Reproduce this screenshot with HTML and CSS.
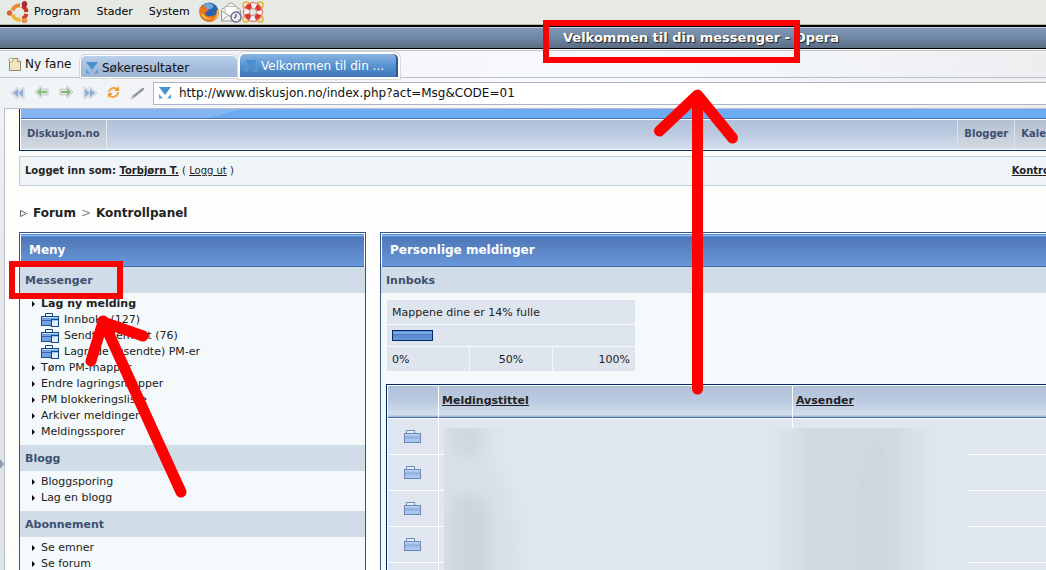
FILE: index.html
```html
<!DOCTYPE html>
<html lang="no">
<head>
  <meta charset="UTF-8" />
  <meta name="viewport" content="width=device-width, initial-scale=1.0" />
  <title>Velkommen til din messenger - Opera</title>
  <link rel="stylesheet" href="styles.css">
</head>
<body>
  <!-- shared icons -->
  <svg class="symbols" aria-hidden="true">
    <symbol id="favicon" viewBox="0 0 14 14">
      <path d="M1 1h12L7 9z" fill="#4692d0" />
      <path d="M1 8l4 4.500H1zM13 8l-4 4.500h4z" fill="#5a9fd6" />
    </symbol>
    <symbol id="pm-folder" viewBox="0 0 18 14">
      <path d="M4.500 3V.5h7V3" fill="#eef5fc" stroke="#1a4a8a" />
      <rect x=".5" y="3.500" width="17" height="9" fill="#6fa3e2" stroke="#1a4a8a" />
      <path d="M1 4.500h16" stroke="#b4d6f8" />
      <path d="M1 7.500h9" stroke="#2f66ad" />
      <rect x="10.500" y="6.500" width="7" height="7" fill="#e4eefa" stroke="#1a4a8a" />
      <path d="M11 7.500h6" stroke="#9cc4ee" />
    </symbol>
    <symbol id="folder" viewBox="0 0 18 14">
      <path d="M2.500 3V.5h8V3" fill="#e9f1fa" stroke="#7289b4" />
      <rect x=".5" y="3.500" width="16" height="9" fill="#a8c6ee" stroke="#6c86b6" />
      <path d="M1 4.500h15" stroke="#b8d7f6" />
      <path d="M1 7.500h15" stroke="#96b6e0" stroke-width="3" />
    </symbol>
  </svg>

  <header class="panel">
    <svg class="panel-logo" viewBox="0 0 22 22" aria-hidden="true">
      <g fill="none" stroke-width="4">
        <path d="M5.500 9.500A7 7 0 0 1 13 4.500" stroke="#f0862b" />
        <path d="M15 5a7 7 0 0 1 4.500 6" stroke="#c8301f" />
        <path d="M19.500 13a7 7 0 0 1-4 4.500" stroke="#d8402a" />
        <path d="M13.500 18.500A7 7 0 0 1 5.500 13.500" stroke="#f4b13b" />
      </g>
      <circle cx="2.500" cy="12" r="2.200" fill="#e5662b" stroke="#c9512a" />
      <circle cx="17.500" cy="3" r="2.400" fill="#b52a3a" stroke="#9b2736" />
      <circle cx="17.500" cy="19.500" r="2.200" fill="#f4a13c" stroke="#d9772a" />
    </svg>
    <nav class="panel-menu">
      <button type="button">Program</button>
      <button type="button">Stader</button>
      <button type="button">System</button>
    </nav>
    <div class="launchers">
      <button type="button" aria-label="Firefox">
        <svg viewBox="0 0 22 22">
          <circle cx="11" cy="11" r="9.500" fill="#2d62ac" />
          <path d="M5 4c4-3 9-2 11 1l-3 3-5 0z" fill="#6fa9de" />
          <path d="M2 5c-2 7 0 15 9 16 8 0 11-7 9.500-13-1 4-3 7-7 7-4 1-7-1-6-4l4-2-4-2 0-3C5 4 4 6 3 7z" fill="#e8741c" />
          <path d="M3 12c1 6 8 8 13 5-4 1-8 0-10-3z" fill="#f9bd3e" />
          <path d="M20.500 8c1 6-2 10-6 12 3-3 5-6 4-10z" fill="#f8c83c" />
        </svg>
      </button>
      <button type="button" aria-label="E-post">
        <svg viewBox="0 0 22 22">
          <path d="M1.500 9L10 2h2l8.500 7v11h-19z" fill="#f3f3f0" stroke="#9a9b97" />
          <path d="M5 5.500h12V12l-6 4-6-4z" fill="#fff" stroke="#bbb" />
          <path d="M1.500 10L11 16l9-6M1.500 20l7-6" fill="none" stroke="#aaa" />
          <circle cx="16" cy="16" r="5" fill="#eeeaf5" stroke="#7d6a9e" stroke-width="1.500" />
          <path d="M16 13v3l-2 1" fill="none" stroke="#333" />
        </svg>
      </button>
      <button type="button" aria-label="Hjelp">
        <svg viewBox="0 0 22 22">
          <g fill="#f7efcf" stroke="#e3b234" stroke-width="1.500">
            <circle cx="4" cy="4" r="3" /><circle cx="18" cy="4" r="3" />
            <circle cx="4" cy="18" r="3" /><circle cx="18" cy="18" r="3" />
          </g>
          <circle cx="11" cy="11" r="6.500" fill="none" stroke="#f5f3ef" stroke-width="6" />
          <circle cx="11" cy="11" r="6.500" fill="none" stroke="#e0362f" stroke-width="5" stroke-dasharray="5.200 5.010" stroke-dashoffset="-2.500" />
          <circle cx="11" cy="11" r="9.500" fill="none" stroke="#d0695c" />
          <circle cx="11" cy="11" r="3.500" fill="#e7e9e5" stroke="#c98a80" />
        </svg>
      </button>
    </div>
  </header>

  <div class="titlebar">
    <h1>Velkommen til din messenger - Opera</h1>
  </div>

  <div class="browser">
    <div class="tabs">
      <button type="button" class="new-tab">
        <svg viewBox="0 0 14 14" aria-hidden="true">
          <path d="M3.500 1.500h6l3 3v9h-11v-9z" fill="#f3e5bd" stroke="#90886f" />
          <path d="M9.500 1.500v3h3" fill="#fff" stroke="#90886f" />
          <circle cx="3" cy="3" r="2" fill="#fffbe8" stroke="#b0a67c" />
        </svg>
        Ny fane
      </button>
      <button type="button" class="tab">
        <svg aria-hidden="true"><use href="#favicon" /></svg>
        Søkeresultater
      </button>
      <button type="button" class="tab tab-active">
        <svg aria-hidden="true"><use href="#favicon" /></svg>
        Velkommen til din ...
      </button>
    </div>

    <div class="toolbar">
      <div class="tools">
        <button type="button" aria-label="Spol tilbake">
          <svg viewBox="0 0 16 16"><path d="M8 2v4l6-4v12l-6-4v4L1 8z" fill="#e2e7ee" stroke="#ccd3dd" /><path d="M8 4v8L3 8zM13 4v8L8 8z" fill="#8fabd4" /></svg>
        </button>
        <button type="button" aria-label="Tilbake">
          <svg viewBox="0 0 16 16"><path d="M1 7l6-6v3h7v6H7v3z" fill="#dde3e1" stroke="#c7cfd0" /><path d="M3 7l4-4v3h6v2H7v3z" fill="#86bd76" /></svg>
        </button>
        <button type="button" aria-label="Fram">
          <svg viewBox="0 0 16 16"><path d="M15 7L9 1v3H2v6h7v3z" fill="#dde3e1" stroke="#c7cfd0" /><path d="M13 7L9 3v3H3v2h6v3z" fill="#86bd76" /></svg>
        </button>
        <button type="button" aria-label="Spol fram">
          <svg viewBox="0 0 16 16"><path d="M8 2v4L2 2v12l6-4v4l7-6z" fill="#e2e7ee" stroke="#ccd3dd" /><path d="M8 4v8l5-4zM3 4v8l5-4z" fill="#8fabd4" /></svg>
        </button>
        <button type="button" aria-label="Oppdater">
          <svg viewBox="0 0 16 16"><g fill="none" stroke="#f2a83e" stroke-width="2"><path d="M3 7a5 5 0 0 1 8-3" /><path d="M12 7a5 5 0 0 1-8 4" /></g><path d="M8 6h5V1zM7 8H2v5z" fill="#ee9a2e" /></svg>
        </button>
        <button type="button" aria-label="Rediger">
          <svg viewBox="0 0 16 16"><path d="M3 12L13 4" stroke="#9297a2" stroke-width="2.500" stroke-linecap="round" /><path d="M1 14l3-2" stroke="#c4c8ce" stroke-width="2" /></svg>
        </button>
      </div>
      <label class="address">
        <svg aria-hidden="true"><use href="#favicon" /></svg>
        <input type="text" aria-label="Adresse" value="http://www.diskusjon.no/index.php?act=Msg&amp;CODE=01">
      </label>
    </div>

    <div class="viewport">
      <button type="button" class="side-handle" aria-label="Vis panel"></button>

      <main class="page">
        <div class="forum-head">
          <div class="forum-banner"></div>
          <nav class="forum-nav">
            <a href="#">Diskusjon.no</a>
            <span class="fill"></span>
            <a href="#">Blogger</a>
            <a href="#">Kalender</a>
          </nav>
        </div>

        <div class="userbar">
          <span><b>Logget inn som: <a href="#">Torbjørn T.</a></b> ( <a href="#">Logg ut</a> )</span>
          <b><a href="#">Kontrollpanel</a></b>
        </div>

        <div class="breadcrumb">
          <svg viewBox="0 0 9 9" aria-hidden="true"><path d="M1.500 1.500v6l6-3z" fill="none" stroke="#666" /></svg>
          <a href="#">Forum</a>
          <span>&gt;</span>
          <a href="#">Kontrollpanel</a>
        </div>

        <div class="columns">
          <section class="box">
            <h2>Meny</h2>
            <h3>Messenger</h3>
            <ul class="menu">
              <li><a href="#"><b>Lag ny melding</b></a></li>
              <li class="sub"><svg aria-hidden="true"><use href="#pm-folder" /></svg><a href="#">Innboks (127)</a></li>
              <li class="sub"><svg aria-hidden="true"><use href="#pm-folder" /></svg><a href="#">Sendte element (76)</a></li>
              <li class="sub"><svg aria-hidden="true"><use href="#pm-folder" /></svg><a href="#">Lagrede (usendte) PM-er</a></li>
              <li><a href="#">Tøm PM-mapper</a></li>
              <li><a href="#">Endre lagringsmapper</a></li>
              <li><a href="#">PM blokkeringsliste</a></li>
              <li><a href="#">Arkiver meldinger</a></li>
              <li><a href="#">Meldingssporer</a></li>
            </ul>
            <h3>Blogg</h3>
            <ul class="menu">
              <li><a href="#">Bloggsporing</a></li>
              <li><a href="#">Lag en blogg</a></li>
            </ul>
            <h3>Abonnement</h3>
            <ul class="menu">
              <li><a href="#">Se emner</a></li>
              <li><a href="#">Se forum</a></li>
            </ul>
          </section>

          <section class="box">
            <h2>Personlige meldinger</h2>
            <h3>Innboks</h3>
            <div class="inbox">
              <table class="quota">
                <tr><td colspan="3">Mappene dine er 14% fulle</td></tr>
                <tr><td colspan="3" class="quota-cell"><div class="quota-bar" style="width: 41px"></div></td></tr>
                <tr><td>0%</td><td class="center">50%</td><td class="right">100%</td></tr>
              </table>

              <div class="mail">
                <table class="mail-list">
                  <thead>
                    <tr>
                      <th class="col-icon"></th>
                      <th class="col-title"><a href="#">Meldingstittel</a></th>
                      <th><a href="#">Avsender</a></th>
                    </tr>
                  </thead>
                  <tbody>
                    <tr><td><svg><use href="#folder" /></svg></td><td></td><td></td></tr>
                    <tr><td><svg><use href="#folder" /></svg></td><td></td><td></td></tr>
                    <tr><td><svg><use href="#folder" /></svg></td><td></td><td></td></tr>
                    <tr><td><svg><use href="#folder" /></svg></td><td></td><td></td></tr>
                    <tr><td><svg><use href="#folder" /></svg></td><td></td><td></td></tr>
                  </tbody>
                </table>
                <!-- smudged-out titles and senders -->
                <svg class="smudge" viewBox="0 0 524 180" aria-hidden="true">
                  <defs><filter id="soft" x="-50%" y="-50%" width="200%" height="200%"><feGaussianBlur stdDeviation="7" /></filter></defs>
                  <rect width="524" height="180" fill="#dfe6ef" />
                  <g filter="url(#soft)">
                    <path d="M-30-30h92q-22 60 0 90 16 24 14 150H-30z" fill="#d9e0e8" />
                    <ellipse cx="22" cy="10" rx="16" ry="22" fill="#d0d8df" />
                    <rect x="6" y="66" width="40" height="150" rx="14" fill="#ced6dd" />
                    <rect x="336" y="-30" width="144" height="260" fill="#d9e0e9" />
                    <rect x="358" y="-30" width="100" height="260" fill="#d1d8df" />
                  </g>
                  <path d="M418 180V80q-4-60 14-66 14 6 10 66v100z" fill="#ced6e0" />
                </svg>
              </div>
            </div>
          </section>
        </div>
      </main>
    </div>
  </div>

  <!-- red marks drawn over the window -->
  <svg class="marks" width="1046" height="570" viewBox="0 0 1046 570" aria-hidden="true">
    <rect x="546" y="23" width="251" height="37" stroke-width="6" />
    <rect x="12" y="264" width="108" height="32" stroke-width="6" />
    <path d="M697.500 389V95M659.500 131l38-36 35 43" />
    <path d="M181 492L103 321M91 361l12-39 40 14" />
  </svg>
</body>
</html>
```
FILE: styles.css
```css
* {
  margin: 0;
  padding: 0;
  box-sizing: border-box;
}

body {
  height: 100vh;
  overflow: hidden;
  position: relative;
  display: flex;
  flex-direction: column;
  background: #fefefc;
  color: #222;
  font: 11px/16px "DejaVu Sans", Verdana, sans-serif;
}

button {
  border: 0;
  background: none;
  color: inherit;
  font: inherit;
}

a {
  color: inherit;
  text-decoration: none;
}

svg {
  display: block;
  flex: none;
}

.symbols {
  position: absolute;
  width: 0;
  height: 0;
}

/* desktop panel */
.panel {
  display: flex;
  align-items: center;
  height: 25px;
  padding-left: 7px;
  background: #e7e9e5;
  border-bottom: 1px solid #b5b9aa;
  color: #000;
}

.panel-logo {
  width: 22px;
  height: 22px;
}

.panel-menu {
  display: flex;
  gap: 16px;
  padding: 0 8px 0 5px;
}

.launchers {
  display: flex;
}

.launchers svg {
  width: 22px;
  height: 22px;
}

.titlebar {
  height: 24px;
  border-top: 2px solid #000;
  border-bottom: 1px solid #000;
  background: linear-gradient(#c5cfdd 1px, #7f95b3 1px, #7088a8 50%, #5b6b81);
  text-align: center;
}

.titlebar h1 {
  padding-left: 356px;
  color: #fff;
  font-size: 13px;
  line-height: 21px;
  text-shadow: 1px 1px 1px #222;
  white-space: nowrap;
}

/* browser chrome */
.browser {
  flex: 1;
  min-height: 0;
  display: flex;
  flex-direction: column;
  border-top: 1px solid #fff;
  background: linear-gradient(100deg, #eef4f6, #f8f4fa 30%, #f6fbfd 55%, #ecebee);
}

.tabs {
  display: flex;
  align-items: flex-end;
  height: 28px;
  padding-left: 4px;
  border-top: 1px solid #c3c7c8;
  border-bottom: 1px solid #bcc1c6;
  color: #111;
  font-size: 12px;
}

.tabs button {
  display: flex;
  align-items: center;
  text-align: left;
  white-space: nowrap;
}

.tabs svg {
  width: 14px;
  height: 14px;
}

.new-tab {
  gap: 3px;
  width: 77px;
  padding: 0 0 5px 4px;
}

.tab {
  gap: 3px;
  width: 156px;
  height: 21px;
  margin-right: 3px;
  padding: 2px 0 0 4px;
  border-radius: 5px 5px 0 0;
  background: linear-gradient(#b9d0ea, #a3bbda 60%, #a0b6d6);
  box-shadow: 0 0 0 1px #fff, 0 0 0 2px #d5d9de;
}

.tab-active {
  width: 158px;
  height: 23px;
  padding-top: 0;
  border-right: 2px solid #2a5898;
  background: linear-gradient(#8bb5e0, #5c96d2 45%, #3e75b8);
  box-shadow: 0 0 0 2px #fff, 0 0 0 3px #d5d9de;
  color: #fff;
}

.toolbar {
  display: flex;
  align-items: center;
  height: 30px;
  padding-left: 10px;
}

.tools {
  display: flex;
  gap: 8px;
  width: 143px;
}

.tools svg {
  width: 16px;
  height: 16px;
}

.address {
  flex: 1;
  display: flex;
  align-items: center;
  gap: 7px;
  height: 23px;
  margin-right: -4px;
  padding-left: 4px;
  border: 1px solid #aeb4c0;
  background: #fff;
}

.address svg {
  width: 14px;
  height: 14px;
}

.address input {
  flex: 1;
  border: 0;
  outline: 0;
  background: none;
  color: #111;
  font: 12px/18px "DejaVu Sans", Verdana, sans-serif;
}

.viewport {
  flex: 1;
  min-height: 0;
  display: flex;
  overflow: hidden;
}

.side-handle {
  flex: 0 0 4px;
  background: linear-gradient(#eef3f5, #e6e5ea 40%, #dde4e6);
}

.side-handle::before {
  content: "";
  display: block;
  margin-top: 250px;
  border: 5px solid transparent;
  border-left: 4px solid #8a9ab4;
  border-right: 0;
}

/* forum, wider than the window */
.page {
  flex: 1 0 calc(100% + 56px);
  padding: 0 12px 0 14px;
  border-top: 1px solid #b9bdcc;
  border-left: 1px solid #b9bdcc;
  background: #fefefd;
}

.forum-head {
  padding: 0 1px 1px;
  border: 1px solid #002a66;
  border-top: 0;
  background: #fff;
}

.forum-banner {
  height: 10px;
  margin-bottom: 1px;
  border-bottom: 1px solid #4375b8;
  background: linear-gradient(165deg, #84b5f0 20%, #6cabf1 20%);
}

.forum-nav {
  display: flex;
  padding-right: 14px;
  background: linear-gradient(#afc0d9, #bccbe1 50%, #d3dfec);
  color: #3d506f;
  font-size: 10px;
  font-weight: bold;
  line-height: 28px;
}

.forum-nav a {
  padding: 0 6px 1px;
  border-left: 1px solid #d9e2ec;
  background: linear-gradient(#b3bfd0, #d3dae2);
}

.forum-nav a:first-child {
  border-left: 0;
  border-right: 1px solid #e4eaf2;
}

.fill {
  flex: 1;
}

.userbar {
  display: flex;
  justify-content: space-between;
  margin: 5px 0 18px;
  padding: 0 5px;
  border: 1px solid #bfcce0;
  background: #f0f5f8;
  font-size: 10px;
  line-height: 28px;
}

.userbar a {
  text-decoration: underline;
}

.breadcrumb {
  display: flex;
  align-items: center;
  gap: 5px;
  margin-bottom: 10px;
  font-size: 12px;
  font-weight: bold;
  line-height: 18px;
}

.breadcrumb svg {
  width: 9px;
  height: 9px;
}

.breadcrumb span {
  color: #888;
  font-weight: normal;
}

.columns {
  display: grid;
  grid-template-columns: 347px 1fr;
  gap: 14px;
}

.box {
  border: 1px solid #345487;
  background: #f4f9fc;
}

.box h2 {
  padding-left: 8px;
  border: 1px solid #fff;
  border-bottom: 0;
  background: linear-gradient(#5c93d8 1px, #82b8f4 1px, #82b8f4 2px, #5c8fd4 2px, #5c8fd4 3px, #4f77b7 3px, #5b86c6 50%, #6798da 32px, #4069a8 32px);
  color: #fff;
  font-size: 12px;
  line-height: 33px;
}

.box h3 {
  padding: 2px 0 0 5px;
  background: #d0dde9;
  color: #3d506f;
  font-size: 11px;
  line-height: 24px;
}

.menu {
  padding: 3px 0 5px 12px;
  list-style: none;
}

.menu li {
  display: flex;
  align-items: center;
}

.menu li::before {
  content: "";
  width: 9px;
  height: 6px;
  background: #000;
  clip-path: polygon(0 0, 3px 50%, 0 100%);
}

.menu .sub::before {
  background: none;
}

.menu svg {
  width: 18px;
  height: 14px;
  margin-right: 5px;
}

.inbox {
  padding: 6px 5px;
}

.quota {
  width: 250px;
  table-layout: fixed;
  border-spacing: 1px;
}

.quota td {
  height: 24px;
  padding: 1px 5px 0;
  background: #dfe5ef;
}

.quota .quota-cell {
  height: 21px;
  padding-top: 0;
}

.quota-bar {
  height: 11px;
  border: 1px solid #002a66;
  background: linear-gradient(#5c93d8 1px, #82b8f4 1px, #82b8f4 2px, #5785c6 3px, #6798da);
}

.center {
  text-align: center;
}

.right {
  text-align: right;
}

.mail {
  position: relative;
  margin-top: 12px;
}

.mail-list {
  width: 100%;
  table-layout: fixed;
  border: 1px solid #002a66;
  border-spacing: 1px;
  background: #fff;
}

.mail-list th {
  height: 32px;
  padding: 0 3px 2px;
  border-bottom: 1px solid #4069a8;
  background: linear-gradient(#afc0d9, #bccbe1 50%, #d3dfec 93%, #a9bbd3 97%);
  text-align: left;
}

.mail-list th a {
  text-decoration: underline;
}

.mail-list .col-icon {
  width: 50px;
}

.mail-list .col-title {
  width: 353px;
}

.mail-list td {
  height: 35px;
  background: #dfe6ef;
}

.mail-list svg {
  width: 18px;
  height: 14px;
  margin: auto;
}

.smudge {
  position: absolute;
  left: 58px;
  top: 44px;
  width: 524px;
  height: 180px;
}

.marks {
  position: absolute;
  left: 0;
  top: 0;
  fill: none;
  stroke: #f00;
  stroke-width: 11px;
  stroke-linecap: round;
  stroke-linejoin: round;
}

.marks rect {
  stroke-width: 6px;
  stroke-linejoin: miter;
}
```
